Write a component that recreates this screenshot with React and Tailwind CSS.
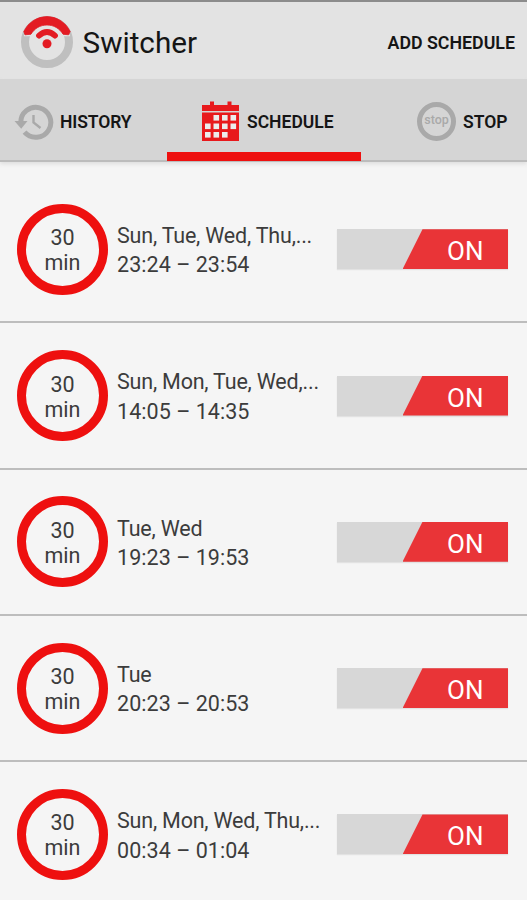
import React, { useState } from 'react';

const initialSchedules = [
  { id: 1, days: 'Sun, Tue, Wed, Thu,...', time: '23:24 – 23:54', on: true },
  { id: 2, days: 'Sun, Mon, Tue, Wed,...', time: '14:05 – 14:35', on: true },
  { id: 3, days: 'Tue, Wed', time: '19:23 – 19:53', on: true },
  { id: 4, days: 'Tue', time: '20:23 – 20:53', on: true },
  { id: 5, days: 'Sun, Mon, Wed, Thu,...', time: '00:34 – 01:04', on: true },
];

const Logo = () => (
  <svg className="h-[54px] w-[54px] shrink-0" viewBox="0 0 54 54" fill="none">
    <circle cx="27" cy="27" r="22" stroke="#bfbfbf" strokeWidth="8" />
    <path d="M4 20.5L50 20.5" stroke="#e3e3e3" strokeWidth="1.5" />
    <path d="M3.8 16.5A25.5 25.5 0 0 1 50.2 16.5L48.5 19.8L43 19.2A18.5 18.5 0 0 0 11 19.2L5 19.8Z" fill="#e31b23" stroke="#e31b23" strokeWidth="0.8" strokeLinejoin="round" />
    <path d="M19 20.6Q27 13.6 35 20.6" stroke="#e31b23" strokeWidth="5.8" strokeLinecap="round" />
    <circle cx="27" cy="28.8" r="4.5" fill="#e31b23" />
  </svg>
);

const HistoryIcon = () => (
  <svg className="h-[36px] w-[40px] shrink-0" viewBox="0 0 40 36" fill="none" stroke="#a9a9a9">
    <path d="M6.8 19A15 15 0 1 1 10.5 28.2" strokeWidth="5" />
    <path d="M0.5 17H13.5L7.2 24.8Z" fill="#a9a9a9" stroke="none" />
    <path d="M19.5 11V18.5L26.5 24" strokeWidth="2.4" />
  </svg>
);

const cells = [
  [11.5, 14], [20, 14], [28.5, 14],
  [3, 22.5], [11.5, 22.5], [20, 22.5], [28.5, 22.5],
  [3, 31], [11.5, 31], [20, 31],
];

const CalendarIcon = () => (
  <svg className="h-[40px] w-[37px] shrink-0" viewBox="0 0 37 40">
    <path d="M0 4H8V0.5H12V4H25.5V0.5H29.5V4H37V10H0ZM0 11.5H37V40H0Z" fill="#e8191c" />
    {cells.map(([x, y]) => (
      <rect key={`${x}-${y}`} x={x} y={y} width="5.6" height="5.6" fill="#ececec" />
    ))}
  </svg>
);

const Toggle = ({ on, onClick }) => (
  <button
    type="button"
    onClick={onClick}
    className="relative h-[40px] w-[171.5px] shrink-0 bg-[#d7d7d7] shadow-[0_1px_1px_#e2e2e2]"
  >
    {on && (
      <span className="absolute inset-y-0 right-0 flex w-[105.5px] items-center justify-center bg-[#e93437] pt-[4px] pl-[20px] text-[26px] leading-none text-white [clip-path:polygon(20px_0,100%_0,100%_100%,0_100%)]">
        ON
      </span>
    )}
  </button>
);

const App = () => {
  const [schedules, setSchedules] = useState(initialSchedules);

  const toggleSchedule = (id) => {
    setSchedules(schedules.map((s) => (s.id === id ? { ...s, on: !s.on } : s)));
  };

  return (
    <div className="h-[900px] w-[527px] overflow-hidden bg-[#f5f5f5] font-['Roboto',sans-serif] text-[#3c3c3c]">
      {/* Header */}
      <header className="flex h-[79px] items-center justify-between border-t-2 border-[#8c8c8c] bg-[#e3e3e3] pt-[3px] pr-[12px] pl-[20px]">
        <div className="flex items-center gap-[8.5px]">
          <Logo />
          <h1 className="pt-[2px] text-[29.7px] text-[#151515]">Switcher</h1>
        </div>
        <button type="button" className="pt-[2px] text-[17.8px] font-semibold whitespace-nowrap text-[#151515]">
          ADD SCHEDULE
        </button>
      </header>

      {/* Tabs */}
      <nav className="flex h-[83px] border-b-2 border-[#bcbcbc] bg-[#d5d5d5] text-[17.5px] font-semibold text-[#151515] shadow-[0_2px_4px_#dddddd]">
        <div className="flex w-[167px] items-center gap-[6px] pt-[4px] pl-[14px]">
          <HistoryIcon />
          <span className="pt-[2px] tracking-[-0.1px]">HISTORY</span>
        </div>
        <div className="flex h-[82px] w-[194px] items-center gap-[8px] border-b-[9px] border-[#ee100f] pt-[11px] pl-[35px]">
          <CalendarIcon />
          <span className="pt-[2px]">SCHEDULE</span>
        </div>
        <div className="flex flex-1 items-center gap-[7px] pt-[4px] pl-[56px]">
          <span className="flex h-[39px] w-[39px] shrink-0 items-center justify-center rounded-full border-[5px] border-[#a9a9a9] pb-[2px] text-[12.5px] font-medium text-[#a9a9a9]">
            stop
          </span>
          <span className="pt-[2px]">STOP</span>
        </div>
      </nav>

      {/* Schedule list */}
      <ul className="pt-[15.1px]">
        {schedules.map((s) => (
          <li key={s.id} className="flex h-[146.3px] items-center border-b-2 border-[#bdbdbd] pr-[19px] pl-[17px]">
            <div className="flex h-[91px] w-[91px] shrink-0 flex-col items-center justify-center rounded-full border-[9px] border-[#ee100f] pt-[2px] text-[21.5px] leading-[25px]">
              <span>30</span>
              <span>min</span>
            </div>
            <div className="flex-1 pt-[2.4px] pl-[9px] text-[21.5px] leading-[29.5px] whitespace-nowrap">
              <p className="tracking-[-0.2px]">{s.days}</p>
              <p className="tracking-[0.05px]">{s.time}</p>
            </div>
            <Toggle on={s.on} onClick={() => toggleSchedule(s.id)} />
          </li>
        ))}
      </ul>
    </div>
  );
};

export default App;
